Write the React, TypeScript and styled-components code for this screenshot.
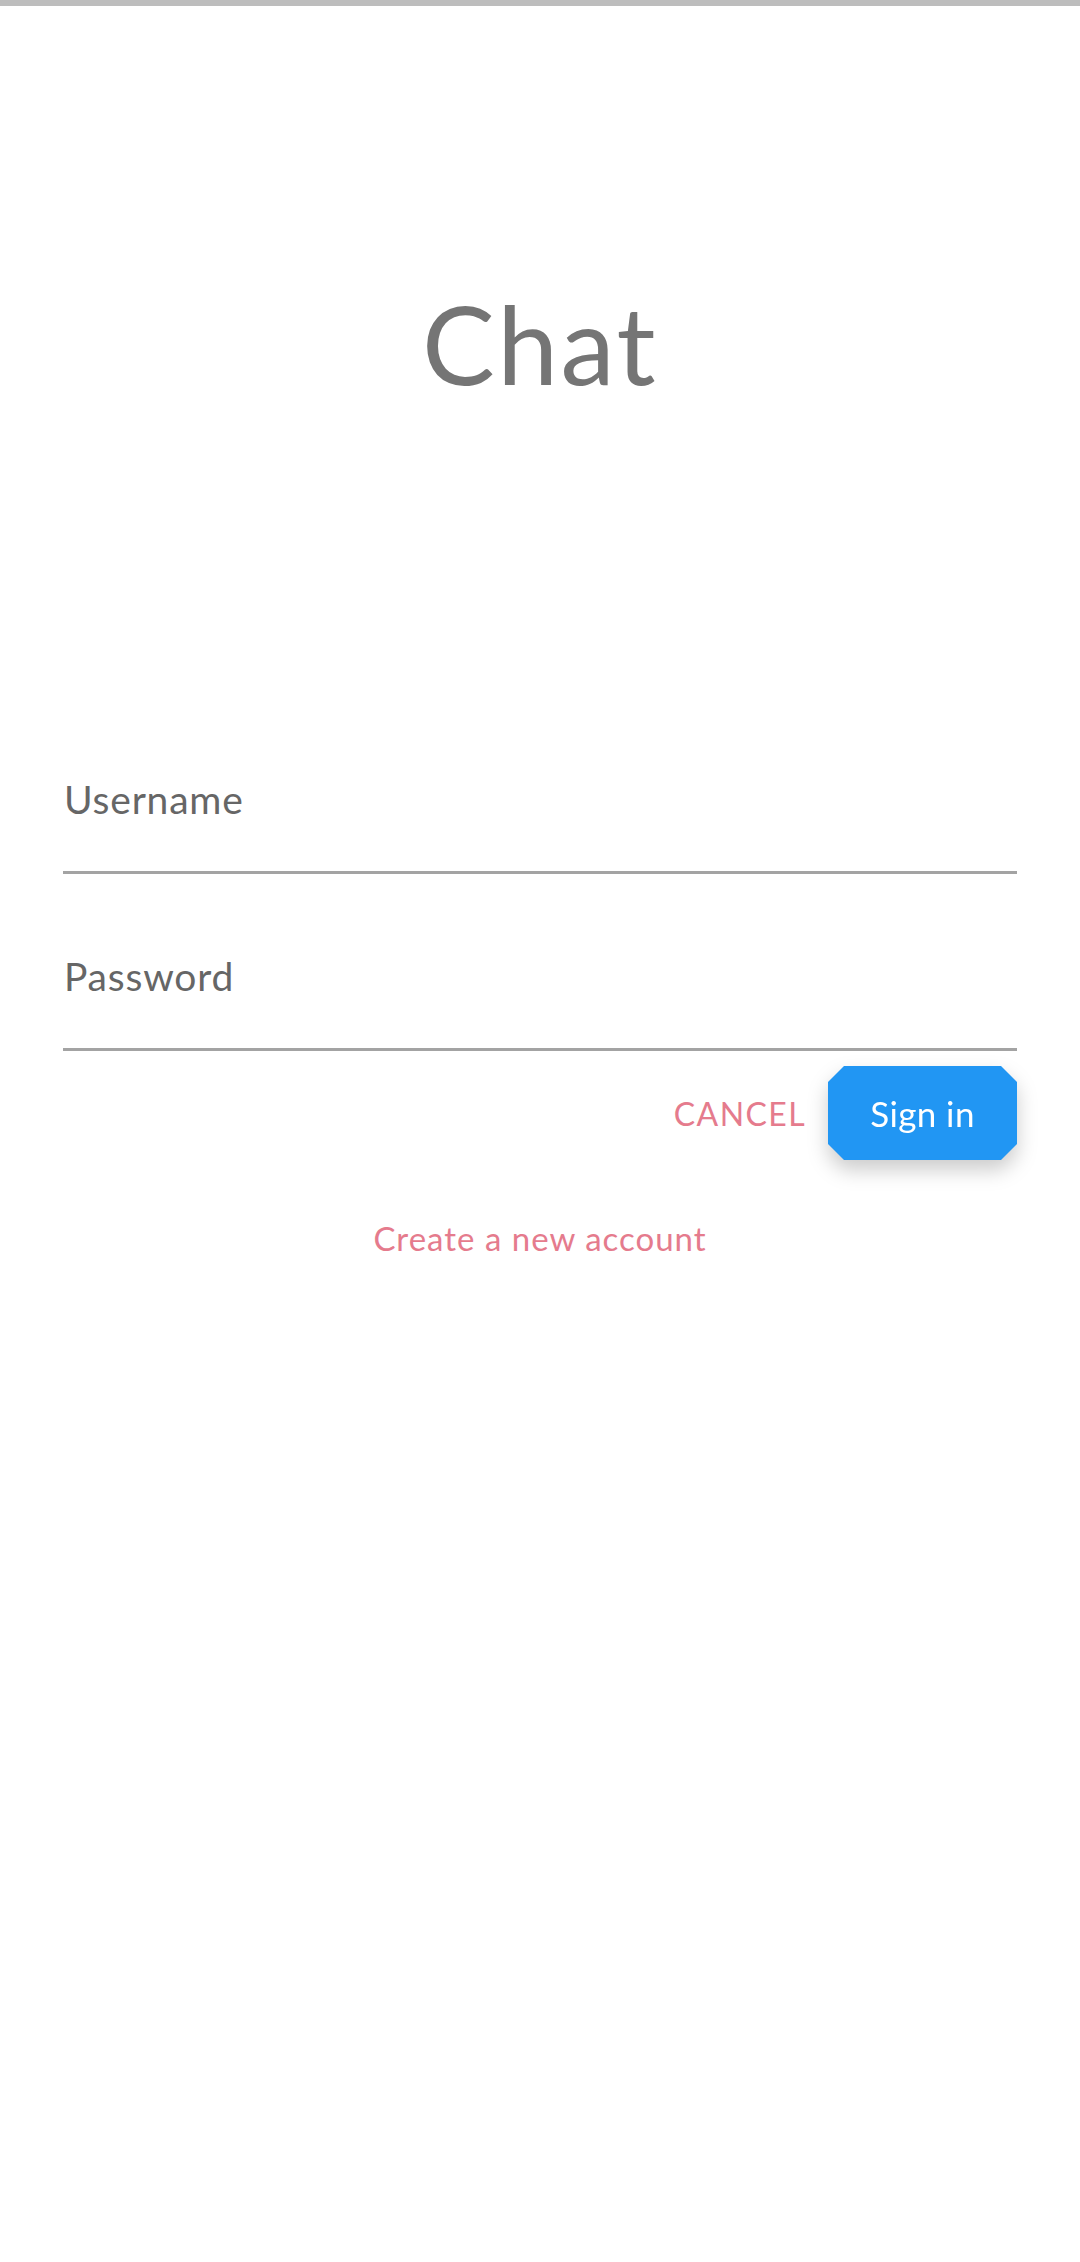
import React from "react";
import styled, { createGlobalStyle } from "styled-components";

const Global = createGlobalStyle`
  html, body { margin: 0; padding: 0; background: #ffffff; }
  body { font-family: Lato, "Open Sans", sans-serif; }
  * { box-sizing: border-box; }
`;

const Page = styled.div`
  width: 1080px;
  min-height: 2262px;
  display: flex;
  flex-direction: column;
  background: #ffffff;
`;

const TopBar = styled.div`
  height: 6px;
  background: #bdbdbd;
`;

const Title = styled.h1`
  margin: 277px 0 0 0;
  font-family: Lato, sans-serif;
  font-weight: 400;
  font-size: 109px;
  letter-spacing: 2.5px;
  line-height: 120px;
  color: #757575;
  text-align: center;
`;

const Form = styled.form`
  display: flex;
  flex-direction: column;
  padding: 0 63px;
  margin-top: 324px;
`;

const Field = styled.input<{ $gap?: number }>`
  display: block;
  width: 100%;
  height: 147px;
  margin: ${(p) => p.$gap ?? 0}px 0 0 0;
  padding: 0 0 0 1px;
  border: none;
  border-bottom: 3px solid #a3a3a3;
  outline: none;
  background: transparent;
  font-family: Lato, sans-serif;
  font-size: 39px;
  letter-spacing: 0.8px;
  color: #616161;
  &::placeholder { color: #666666; opacity: 1; }
`;

const Actions = styled.div`
  display: flex;
  justify-content: flex-end;
  align-items: center;
  gap: 22px;
  margin-top: 15px;
`;

const TextButton = styled.button`
  border: none;
  background: none;
  padding: 0;
  font-family: Lato, sans-serif;
  font-size: 32px;
  color: #e57b8d;
  letter-spacing: 1.4px;
  cursor: pointer;
`;

const ShadowWrap = styled.div`
  filter: drop-shadow(0 10px 10px rgba(0, 0, 0, 0.2));
`;

const PrimaryButton = styled.button`
  width: 189px;
  height: 94px;
  border: none;
  padding: 0;
  background: #2196f3;
  color: #ffffff;
  font-family: Lato, sans-serif;
  font-size: 35px;
  letter-spacing: 0.4px;
  cursor: pointer;
  clip-path: polygon(
    16px 0, calc(100% - 16px) 0, 100% 16px, 100% calc(100% - 16px),
    calc(100% - 16px) 100%, 16px 100%, 0 calc(100% - 16px), 0 16px
  );
`;

const LinkRow = styled.div`
  display: flex;
  justify-content: center;
  margin-top: 58px;
`;

const Link = styled.a`
  font-family: Lato, sans-serif;
  font-size: 33px;
  color: #e57b8d;
  text-decoration: none;
  letter-spacing: 1px;
`;

export default function App() {
  return (
    <Page>
      <Global />
      <TopBar />
      <Title>Chat</Title>
      <Form onSubmit={(e) => e.preventDefault()}>
        <Field placeholder="Username" />
        <Field $gap={30} type="password" placeholder="Password" />
        <Actions>
          <TextButton type="button">CANCEL</TextButton>
          <ShadowWrap>
            <PrimaryButton type="submit">Sign in</PrimaryButton>
          </ShadowWrap>
        </Actions>
        <LinkRow>
          <Link href="#">Create a new account</Link>
        </LinkRow>
      </Form>
    </Page>
  );
}
